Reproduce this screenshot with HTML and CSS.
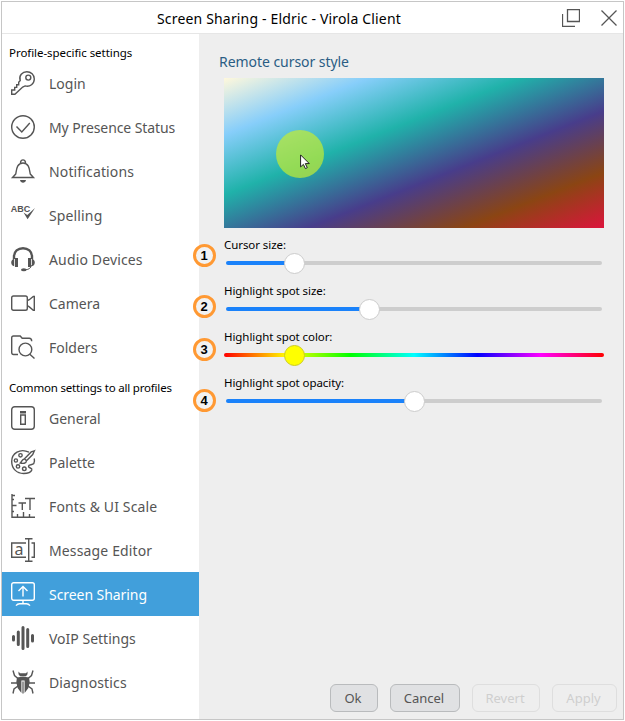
FILE: index.html
```html
<!DOCTYPE html>
<html lang="en">
<head>
<meta charset="utf-8">
<title>Screen Sharing - Eldric - Virola Client</title>
<link rel="stylesheet" href="styles.css">
</head>
<body>
<div class="window">
  <header class="titlebar">
    <h1 class="title">Screen Sharing - Eldric - Virola Client</h1>
    <div class="controls">
      <svg class="ctl" width="18" height="18" viewBox="0 0 18 18"><path d="M5.500 .5h12v12h-12zM.5 5v12.500H13"/></svg>
      <svg class="ctl" width="16" height="16" viewBox="0 0 16 16"><path d="M.5.5l15 15M15.500 .5l-15 15"/></svg>
    </div>
  </header>
  <div class="body">
    <nav class="sidebar">
      <h2 class="group">Profile-specific settings</h2>
      <a class="item"><svg class="icon" viewBox="0 0 24 24"><path d="M9.200 9.500C7.500 4.500 11.500 .7 15.800 .7c4.200 0 7.500 3.200 7.500 7.300 0 4.600-4.300 8.300-9.200 6.900l-2.400 1.100L3.900 23.300H.7v-4.300h3v-2.600h2v-2.600h2v-2.500z"/><circle cx="17.300" cy="6.600" r="2.500"/></svg><span>Login</span></a>
      <a class="item tight"><svg class="icon" viewBox="0 0 24 24"><circle cx="12" cy="12" r="11.300"/><path d="M5.500 11.500l5.300 5.500 8-9"/></svg><span>My Presence Status</span></a>
      <a class="item wide"><svg class="icon" viewBox="0 0 24 24"><path d="M1.500 18.500h21l-3.200-3.400C18.500 12 18.700 4 12 4S5.500 12 4.700 15.100zM9.500 4.200C9.200-.2 14.800-.2 14.500 4.200"/><path class="solid" d="M9 21h6c-.6 3.600-5.400 3.600-6 0z"/></svg><span>Notifications</span></a>
      <a class="item wide"><svg class="icon" viewBox="0 0 24 24"><text class="abc" x="-.2" y="8.500" textLength="19.500" lengthAdjust="spacingAndGlyphs">ABC</text><path class="solid" d="M12.500 9.500l3.800 2.500 7.700-7-7.400 11.200z"/></svg><span>Spelling</span></a>
      <a class="item wide"><svg class="icon" viewBox="0 0 24 24"><path class="thick" d="M3 12V9.500C3 4.500 7 1.200 12 1.200s9 3.300 9 8.300V12"/><path class="solid" d="M4 11h3v9H4zM17 11h3v9h-3zM3.200 11.700v7.600C-.8 18.500-.8 12.500 3.200 11.700zM20.800 11.700v7.600c4-.8 4-6.800 0-7.600z"/><path class="fine" d="M20.500 18c-.5 3-2.500 4.500-6 4.800"/><ellipse class="solid" cx="12.800" cy="22.800" rx="2.800" ry="1.500"/></svg><span>Audio Devices</span></a>
      <a class="item"><svg class="icon" viewBox="0 0 24 24"><path d="M2.500 5h12q1.800 0 1.800 1.800v10.700q0 1.800-1.800 1.800h-12Q.7 19.300 .7 17.500V6.800Q.7 5 2.500 5zM16.300 9.700l2-1 4-3.300h1v14h-1l-4-3.500-2-1.200"/></svg><span>Camera</span></a>
      <a class="item"><svg class="icon" viewBox="0 0 24 24"><path d="M7 19.500H2.500Q.7 19.500 .7 17.500V3Q.7 1 2.500 1h6.700l2 2.300h7q2.500 0 2.500 3"/><circle cx="14.400" cy="14.500" r="6.400"/><path d="M18.800 19.300l4.700 4.300"/></svg><span>Folders</span></a>
      <h2 class="group second">Common settings to all profiles</h2>
      <a class="item"><svg class="icon" viewBox="0 0 24 24"><rect x=".7" y=".7" width="22.600" height="22.600" rx="3"/><path class="solid" d="M9 5h6v2.500H9z"/><path d="M9.700 9h4.600v9.300H9.700z"/></svg><span>General</span></a>
      <a class="item"><svg class="icon" viewBox="0 0 24 24"><path d="M18 2.200C9-2.200 .7 3.500 .7 11.500c0 7 5 12 11.800 12 4 0 7.500-1.300 8.300-3.500.8-2.500-3.300-1.500-3.300-3.800 0-2 4-1 5.300-2.700 1-1.800.8-3.500.4-5"/><circle cx="9.500" cy="5.300" r="1.700"/><circle cx="4.900" cy="10.500" r="1.600"/><circle cx="7" cy="16.400" r="1.700"/><circle cx="13.300" cy="18.800" r="1.800"/><path d="M23.400.8l-3.200 1.100-6.700 6.900 2 2 6.200-6.200zM13.500 9c-2.500-.2-2.600 2.800-4.200 4 2.500.7 6 .7 6.200-2.200"/></svg><span>Palette</span></a>
      <a class="item wide"><svg class="icon" viewBox="0 0 24 24"><path d="M1 0v23.300h23M1 1.500h3M1 5.500h2M1 11.500h4.500M1 17.500h2M6.500 23v-3M12.500 23v-5M18.500 23v-3M7.500 9h7.500M11.300 9v7M14 4.500h10M19 4.500V16"/></svg><span>Fonts &amp; UI Scale</span></a>
      <a class="item wide"><svg class="icon" viewBox="0 0 24 24"><path d="M15 5H.7v14.300H15M20.500 5h2.800v14.300h-2.800M14 .7h7.500M14 23.300h7.500M17.700 .7v22.600"/><text class="letter" x="3.500" y="16.500">a</text></svg><span>Message Editor</span></a>
      <a class="item selected"><svg class="icon" viewBox="0 0 24 24"><rect x=".7" y=".7" width="22.600" height="17.600" rx="2"/><path d="M12 14.500V4.500M7.500 9L12 4.500 16.500 9M12 18.500v3.300M5 23.600q1.500-1.800 3.500-1.800h7q2 0 3.500 1.800"/></svg><span>Screen Sharing</span></a>
      <a class="item"><svg class="icon" viewBox="0 0 24 24"><path class="bars" d="M2.500 10.500v3.500M7.300 6v12.500M12 1.500v21M16.700 3.500v17M21.500 9.500v5.500"/></svg><span>VoIP Settings</span></a>
      <a class="item wide"><svg class="icon" viewBox="0 0 24 24"><path class="solid" d="M7.500 1.500l1.500 1.700h6l1.500-1.700v2.700l-1.500 2H9l-1.500-2zM6 7.500q6-1.500 12 0l.7 4.500-1.300 6-3.800 5V10.500h-3.200V23L6.600 18l-1.300-6zM11.400 11.500h1.200v12h-1.200z"/><path d="M2 .5l1.500 5 4 3.500M22 .5l-1.500 5-4 3.500M0 13h6.500M24 13h-6.500M7 16l-4 3-1 4.500M17 16l4 3 1 4.500"/></svg><span>Diagnostics</span></a>
    </nav>
    <main class="content">
      <h2 class="heading">Remote cursor style</h2>
      <div class="preview">
        <div class="spot"></div>
        <svg class="pointer" width="12" height="17" viewBox="0 0 12 17"><path d="M.6.9v12l2.800-2.500 2 4.200 1.900-.9-2-4.100h4z"/></svg>
      </div>
      <div class="setting"><span class="num n1">1</span><label class="label">Cursor size:</label>
        <div class="slider s1"><div class="track"></div><div class="knob"></div></div></div>
      <div class="setting"><span class="num n2">2</span><label class="label">Highlight spot size:</label>
        <div class="slider s2"><div class="track"></div><div class="knob"></div></div></div>
      <div class="setting"><span class="num n3">3</span><label class="label">Highlight spot color:</label>
        <div class="slider s3"><div class="track hue"></div><div class="knob yellow"></div></div></div>
      <div class="setting"><span class="num n4">4</span><label class="label">Highlight spot opacity:</label>
        <div class="slider s4"><div class="track"></div><div class="knob"></div></div></div>
      <footer class="actions">
        <button class="btn ok">Ok</button>
        <button class="btn cancel">Cancel</button>
        <button class="btn revert" disabled>Revert</button>
        <button class="btn apply" disabled>Apply</button>
      </footer>
    </main>
  </div>
</div>
</body>
</html>
```
FILE: styles.css
```css
* { box-sizing: border-box; }
body { margin: 0; background: #fff; font-family: "Noto Sans", sans-serif; color: #000; }
h1, h2 { margin: 0; font-weight: 400; }
.window { width: 623px; height: 719px; margin: 1px; border: 1px solid #c6c6c6; display: flex; flex-direction: column; }
.titlebar { height: 32px; flex: none; border-bottom: 1px solid #e6e6e6; display: flex; justify-content: space-between; padding: 0 6px 0 155px; }
.title { font-size: 14px; letter-spacing: .17px; line-height: 33px; white-space: nowrap; }
.controls { display: flex; align-items: flex-start; gap: 21px; padding-top: 7px; }
.ctl { fill: none; stroke: #555; stroke-width: 1.3; display: block; }
.ctl + .ctl { margin-top: 1px; }
.body { flex: 1; display: flex; min-height: 0; }
.sidebar { width: 197px; flex: none; background: #fff; }
.group { height: 27px; padding-left: 7px; font-size: 11.5px; letter-spacing: -.05px; line-height: 37px; white-space: nowrap; }
.group.second { letter-spacing: -.19px; }
.item { height: 44px; padding-left: 9px; display: flex; align-items: center; gap: 14px; font-size: 14px; color: #555; white-space: nowrap; }
.item.tight { letter-spacing: -.1px; }
.item.wide { letter-spacing: .14px; }
.item.selected { background: #419fdb; color: #fff; letter-spacing: -.06px; }
.icon { width: 24px; height: 24px; flex: none; fill: none; stroke: currentColor; stroke-width: 1.4; overflow: visible; letter-spacing: 0; }
.icon .solid { fill: currentColor; stroke: none; }
.icon .thick { stroke-width: 2.4; }
.icon .fine { stroke-width: 1; }
.icon .bars { stroke-width: 3; stroke-linecap: round; }
.icon text { fill: currentColor; stroke: none; }
.abc { font: bold 9px "Liberation Sans", sans-serif; }
.letter { font: 16px "Noto Sans", sans-serif; }
.content { flex: 1; background: #eee; padding: 16px 6px 7px 25px; display: flex; flex-direction: column; }
.heading { font-size: 14px; line-height: 24px; height: 28px; margin-left: -5px; letter-spacing: -.05px; color: #2a5d84; }
.preview { width: 380px; height: 150px; position: relative; background: linear-gradient(to bottom right, #fff8dc, #87cefa 19%, #20b2aa 39%, #483d8b 61%, #8b4513 81.5%, #dc143c); }
.spot { position: absolute; left: 52px; top: 52px; width: 48px; height: 48px; border-radius: 50%; background: rgba(196, 236, 50, .7); }
.pointer { position: absolute; left: 76px; top: 76px; fill: #fff; stroke: #222; stroke-width: 1; }
.setting { position: relative; width: 380px; height: 46px; padding-top: 8px; }
.label { display: block; height: 16px; font-size: 11.5px; letter-spacing: -.07px; line-height: 18px; white-space: nowrap; }
.num { position: absolute; left: -31.5px; width: 23px; height: 23px; border: 3px solid #ff9933; border-radius: 50%; background: #f2f2f2; font: bold 13px/17px "Liberation Sans", sans-serif; text-align: center; }
.n1 { top: 16px; }
.n2 { top: 21px; }
.n3 { top: 18px; }
.n4 { top: 23px; }
.slider { height: 21px; display: grid; align-items: center; }
.slider > * { grid-area: 1 / 1; }
.s1 { --at: 70.5px; }
.s2 { --at: 145.5px; }
.s3 { --at: 70.5px; }
.s4 { --at: 190.5px; }
.track { height: 4px; margin: 0 2px; border-radius: 2px; background: linear-gradient(90deg, #1a82fa var(--at), #cdcdcd var(--at)); }
.track.hue { margin: 0; background: linear-gradient(90deg, #f00, #ff0, #0f0, #0ff, #00f, #f0f, #f00); }
.knob { width: 21px; height: 21px; margin-left: calc(var(--at) - 10.5px); border-radius: 50%; background: #fff; border: 1px solid #ccc; position: relative; top: 1px; }
.knob.yellow { background: #ff0; border-color: #cccc22; }
.actions { margin-top: auto; display: flex; justify-content: flex-end; gap: 12px; }
.btn { height: 28px; padding: 0 2px 0 0; border: 1px solid #b9bbbd; border-radius: 6px; background: #e0e1e3; color: #555; font: 13px/24px "Noto Sans", sans-serif; }
.btn:disabled { background: transparent; border-color: #dedede; color: #cfcfcf; }
.ok { width: 48px; }
.cancel { width: 70px; }
.revert { width: 68px; }
.apply { width: 65px; }
```
